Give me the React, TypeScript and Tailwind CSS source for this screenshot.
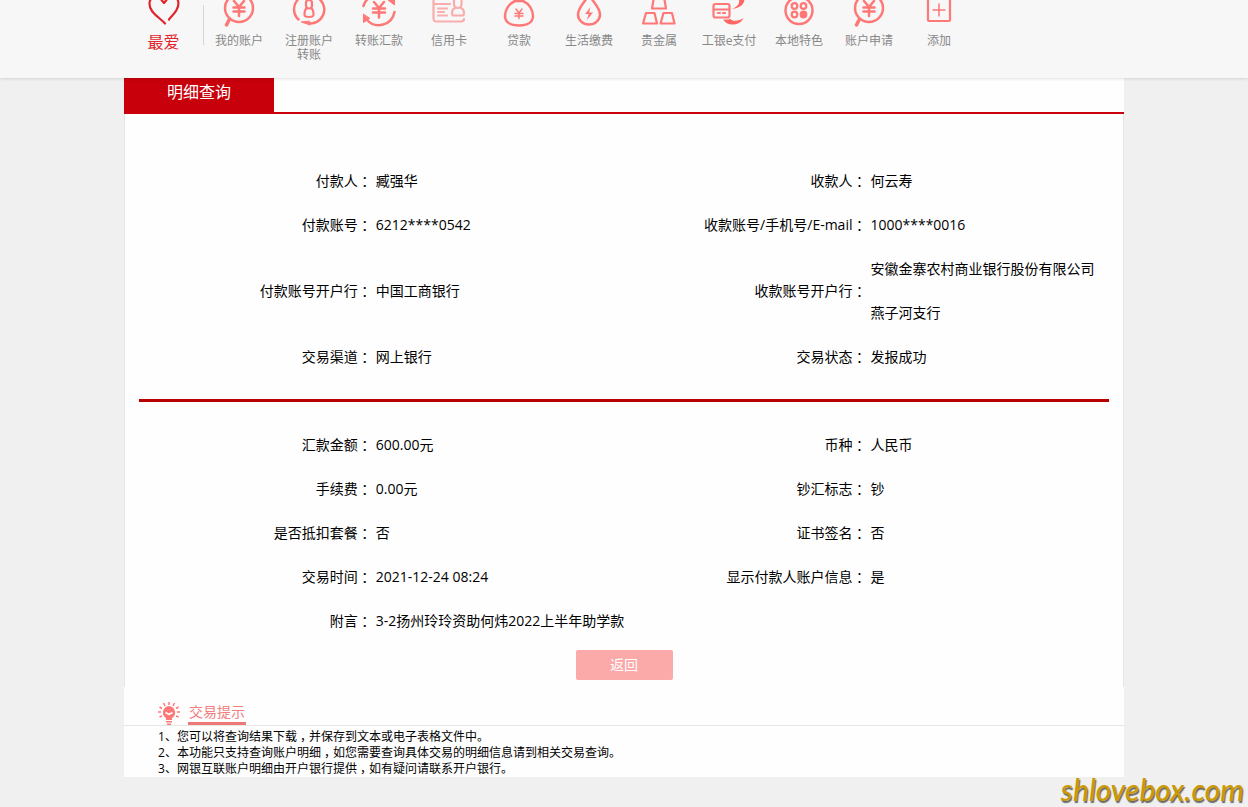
import React from 'react';

const red = '#ff7878';

function Icon({ children, color = red }: { children: React.ReactNode; color?: string }) {
    return (
        <svg className="h-7 w-10" viewBox="0 0 40 28" fill="none" stroke={color} strokeWidth="2.200" strokeLinecap="round" strokeLinejoin="round" aria-hidden="true">
            {children}
        </svg>
    );
}

const HeartIcon = () => (
    <Icon color="#e0262c">
        <path d="M17.500 0 20 3 22.500 0M31-3C35-1 35.500 5 32.500 10c-2 4-5 6-7.500 9.500" />
        <path d="M9-3C4.500 0 4.500 6 8 11c3.500 5 9 8 13 12.500" />
    </Icon>
);

const LensIcon = () => (
    <Icon>
        <circle cx="20" cy="8" r="14" strokeWidth="2.500" />
        <path d="M10.500 19 7.500 25" strokeWidth="3.500" />
        <path d="m15 1 5 6 5-6M20 7.500v8.500M14.500 7.500h11M14.500 11.500h11" strokeWidth="2.500" />
    </Icon>
);

const UserCircleIcon = () => (
    <Icon>
        <path d="M9.500 19.500A14 14 0 0 1 9-.5M31-.5A14 14 0 0 1 20 23.500" strokeWidth="2.500" />
        <path d="m12.500 22 8.500 3-.5-3.500z" fill={red} stroke={red} strokeWidth="1" />
        <rect x="17" y="0" width="6" height="8.500" rx="3" />
        <path d="M17.500 8.500c-1.500 1-2 3-2 6 0 2 1 2.500 4.500 2.500s4.500-.5 4.500-2.500c0-3-.5-5-2-6" />
    </Icon>
);

const TransferIcon = () => (
    <Icon>
        <path d="M4.500 6A16 16 0 0 1 11-3M35.500 12A16 16 0 0 1 8 20" strokeWidth="2.500" />
        <path d="M35.500-3v8l-6-4.500zM4.500 14.500v8l6-4z" fill={red} strokeWidth="1" />
        <path d="m15 2 5 6 5-6M20 8v9.500M14 8.500h12M14 12.500h12" strokeWidth="2.500" />
    </Icon>
);

const CardIcon = () => (
    <Icon color="#f9adad">
        <path d="M4.500-3v21c0 3 .5 3.500 3 3.500H32c2 0 3-.5 3-2.500M5 4h16M9 8.500h9M9 12h6M9 15.500h9" />
        <rect x="25" y="-3" width="7.500" height="11" rx="3.500" />
        <path d="M26 8c-2.500 1-3 3-3 5.500 0 1.500.5 2 2 2h8c1.500 0 2-.5 2-2 0-2.500-.5-4.500-3-5.500" />
    </Icon>
);

const LoanIcon = () => (
    <Icon>
        <path d="M15-1h10M16 1h8C30 3.500 34 10 34 16c0 6-5.500 9.500-14 9.500S6 22 6 16C6 10 10 3.500 16 1Z" strokeWidth="2.500" />
        <path d="m17 9 3 4 3-4M20 13v5.500M16 13.500h8M16 16h8" strokeWidth="1.500" />
    </Icon>
);

const DropIcon = () => (
    <Icon>
        <path d="M20-5C14 4 9 8 9 14.500a11 10 0 0 0 22 0C31 8 26 4 20-5Z" strokeWidth="2.500" />
        <path d="m21.500 7-5.500 7h3.500l-1.500 6 6-7.500h-4z" fill={red} stroke="none" />
    </Icon>
);

const GoldIcon = () => (
    <Icon>
        <path d="M15-3h10l2 11.500H13zM7 13h8.500L18 23.500H4zM24.500 13H33l2.500 10.500h-14z" />
    </Icon>
);

const PayIcon = () => (
    <Icon>
        <path d="M29-3h6c1.500 6-2 10.500-12 12C29 6.500 32 3 29-3Z" fill="#ff6767" stroke="none" />
        <path d="M14 19c2 4 6 6 11 5.500 4.500-.5 8-3 9.500-6.500-4 3-11 4-13 1z" fill="#ff6767" stroke="none" />
        <rect x="2.500" y="1.500" width="19" height="18" rx="2" fill="#f7f7f7" stroke="none" />
        <rect x="4.500" y="4" width="16" height="13.500" rx="2" />
        <path d="M5 9.500h15M9 13h2M14 13h2" />
    </Icon>
);

const LocalIcon = () => (
    <Icon>
        <circle cx="20" cy="10.500" r="13.500" strokeWidth="2.500" />
        <circle cx="15.500" cy="6" r="2.800" />
        <circle cx="24.500" cy="6" r="2.800" />
        <circle cx="15.500" cy="14.500" r="2.800" />
        <circle cx="24.500" cy="14.500" r="2.800" fill={red} />
    </Icon>
);

const AddIcon = () => (
    <Icon>
        <rect x="9" y="-1" width="22" height="22" rx="1" />
        <path d="M20 4v12M14 10h12" strokeWidth="1.500" />
    </Icon>
);

const navItems = [
    { label: '我的账户', icon: <LensIcon /> },
    { label: '注册账户转账', icon: <UserCircleIcon /> },
    { label: '转账汇款', icon: <TransferIcon /> },
    { label: '信用卡', icon: <CardIcon /> },
    { label: '贷款', icon: <LoanIcon /> },
    { label: '生活缴费', icon: <DropIcon /> },
    { label: '贵金属', icon: <GoldIcon /> },
    { label: '工银e支付', icon: <PayIcon /> },
    { label: '本地特色', icon: <LocalIcon /> },
    { label: '账户申请', icon: <LensIcon /> },
    { label: '添加', icon: <AddIcon /> },
];

const partyRows = [
    ['付款人', '臧强华', '收款人', '何云寿'],
    ['付款账号', '6212****0542', '收款账号/手机号/E-mail', '1000****0016'],
    ['付款账号开户行', '中国工商银行', '收款账号开户行', '安徽金寨农村商业银行股份有限公司燕子河支行'],
    ['交易渠道', '网上银行', '交易状态', '发报成功'],
];

const paymentRows = [
    ['汇款金额', '600.00元', '币种', '人民币'],
    ['手续费', '0.00元', '钞汇标志', '钞'],
    ['是否抵扣套餐', '否', '证书签名', '否'],
    ['交易时间', '2021-12-24 08:24', '显示付款人账户信息', '是'],
    ['附言', '3-2扬州玲玲资助何炜2022上半年助学款'],
];

const tips = [
    '您可以将查询结果下载，并保存到文本或电子表格文件中。',
    '本功能只支持查询账户明细，如您需要查询具体交易的明细信息请到相关交易查询。',
    '网银互联账户明细由开户银行提供，如有疑问请联系开户银行。',
];

// full-width colon or comma, centred in its box
function Mark({ children }: { children: string }) {
    return <span className="inline-block w-[1em] text-center [font-feature-settings:'halt']">{children}</span>;
}

function DetailTable({ rows }: { rows: string[][] }) {
    return (
        <table className="w-full table-fixed text-sm leading-[44px] text-black">
            <colgroup>
                <col className="w-[24%]" />
                <col className="w-[27%]" />
                <col className="w-[24%]" />
                <col className="w-[25%]" />
            </colgroup>
            <tbody>
                {rows.map(([label, value, label2, value2]) => (
                    <tr key={label}>
                        <th scope="row" className="text-right font-normal whitespace-nowrap">{label}<Mark>：</Mark></th>
                        <td className="pl-1" colSpan={label2 ? 1 : 3}>{value}</td>
                        {label2 && (
                            <>
                                <th scope="row" className="text-right font-normal whitespace-nowrap">{label2}<Mark>：</Mark></th>
                                <td className="pr-2 pl-1">{value2}</td>
                            </>
                        )}
                    </tr>
                ))}
            </tbody>
        </table>
    );
}

export default function App() {
    return (
        <div className="min-h-screen bg-[#f0f0f0] font-['Open_Sans','Noto_Sans_CJK_SC',sans-serif]">
            <header className="relative z-10 h-[78px] bg-[#f7f7f7] shadow-[0_1px_3px_rgba(0,0,0,0.12)]">
                <nav className="mx-auto flex max-w-[1000px] items-start">
                    <a href="#" className="flex w-[79px] flex-col items-center text-base leading-7 text-[#e0262c]">
                        <HeartIcon />
                        最爱
                    </a>
                    <div className="mt-[5px] h-10 w-px bg-[#d4d4d4]" />
                    {navItems.map((item) => (
                        <a key={item.label} href="#" className="flex w-[70px] flex-col items-center px-2 text-center text-xs leading-[14px] text-[#888888]">
                            {item.icon}
                            <span className="mt-1.5 w-14">{item.label}</span>
                        </a>
                    ))}
                </nav>
            </header>

            <main className="mx-auto max-w-[1000px] bg-[#fefefe]">
                <div className="flex h-9 border-b-2 border-[#c7000b]">
                    <h1 className="w-[150px] bg-[#c7000b] text-center text-base leading-7 text-white">明细查询</h1>
                </div>

                <section className="border-x border-[#e6e6e6] px-[14px] pt-[45px] pb-[7px]">
                    <DetailTable rows={partyRows} />
                    <hr className="mt-5 mb-[21px] border-t-[3px] border-[#b80000]" />
                    <DetailTable rows={paymentRows} />
                    <div className="mt-[7px] flex justify-center">
                        <button type="button" className="h-[30px] w-[97px] rounded-xs bg-[#fba9a9] text-sm text-white">返回</button>
                    </div>
                </section>

                <section>
                    <div className="flex items-end gap-2 border-b border-[#e6e6e6] pt-[14px] pl-[34px]">
                        <svg className="h-6 w-[22px]" viewBox="0 0 22 24" fill="none" stroke={red} strokeWidth="1.500" aria-hidden="true">
                            <path d="M11 1v3M5.500 2l1.500 3M16.500 2 15 5M1.500 6 4 7.500M20.500 6 18 7.500M0 11h3M22 11h-3M1.500 16 4 15M20.500 16 18 15" />
                            <path d="M11 5a6.500 6.500 0 0 0-3 12v2h6v-2a6.500 6.500 0 0 0-3-12ZM8 20h6v1.500H8zM9 22.500h4V24H9z" fill={red} stroke="none" />
                            <path d="m7.500 11.500 3.500 2 3.500-2" stroke="#fff" />
                        </svg>
                        <h2 className="border-b-[3px] border-[#ee7777] px-px text-sm leading-5 text-[#f27f7f]">交易提示</h2>
                    </div>
                    <ol className="pt-[3px] pl-[34px] text-xs leading-4 text-black">
                        {tips.map((tip, i) => (
                            <li key={tip}>
                                {i + 1}、{tip.split('，').map((part, n) => (
                                    <React.Fragment key={part}>{n > 0 && <Mark>，</Mark>}{part}</React.Fragment>
                                ))}
                            </li>
                        ))}
                    </ol>
                </section>
            </main>

            <footer className="flex justify-end pr-1 font-['Lato',sans-serif] text-[30px] leading-6 font-medium text-[#cc9900] italic [text-shadow:1px_2px_1px_#666]">
                shlovebox.com
            </footer>
        </div>
    );
}
